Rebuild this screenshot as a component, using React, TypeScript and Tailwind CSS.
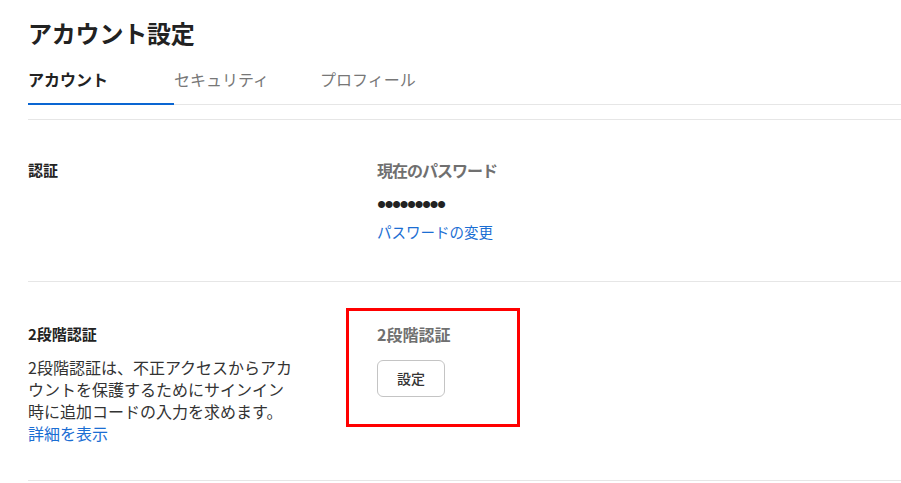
const FONT = "font-['Noto_Sans_CJK_JP','Noto_Sans',sans-serif]";

const TABS = ["アカウント", "セキュリティ", "プロフィール"];

export default function App() {
  return (
    <div className={`${FONT} bg-white min-h-[483px] pl-[28px] pt-[17px] text-[#222]`}>
      <h1 className="text-[24px] leading-[32px] font-bold tracking-[-0.2px]">アカウント設定</h1>

      {/* Tabs */}
      <div className="mt-[18px] flex border-b border-[#e6e6e6]">
        {TABS.map((tab, i) => (
          <div
            key={tab}
            className={
              i === 0
                ? "w-[146px] -mb-px border-b-2 border-[#0a66d2] pb-[11px] text-[16px] leading-[24px] font-bold text-[#222]"
                : "w-[146px] pb-[13px] text-[16px] leading-[24px] text-[#777]"
            }
          >
            {tab}
          </div>
        ))}
      </div>

      <div className="mt-[14px] border-t border-[#e6e6e6]" />

      {/* 認証 */}
      <div className="flex pt-[38px] pb-[38px] border-b border-[#e6e6e6]">
        <div className="w-[349px] text-[15px] leading-[24px] font-bold">認証</div>
        <div className="flex flex-col">
          <div className="text-[16px] leading-[24px] font-bold text-[#707070] tracking-[-1px]">現在のパスワード</div>
          <div className="mt-[10px] font-['Liberation_Sans',sans-serif] text-[26px] leading-[24px] tracking-[-1.6px] text-[#222]">
            •••••••••
          </div>
          <a href="#" className="mt-[5px] text-[14.5px] leading-[22px] text-[#1b6ed3]">
            パスワードの変更
          </a>
        </div>
      </div>

      {/* 2段階認証 */}
      <div className="flex pt-10 pb-[36px] border-b border-[#e6e6e6]">
        <div className="w-[349px]">
          <div className="text-[15px] leading-[24px] font-bold">2段階認証</div>
          <p className="mt-[10px] w-[268px] text-[16px] leading-[22px] text-[#333]">
            2段階認証は、不正アクセスからアカウントを保護するためにサインイン時に追加コードの入力を求めます。
            <br />
            <a href="#" className="text-[#1b6ed3]">詳細を表示</a>
          </p>
        </div>
        <div className="relative flex flex-col items-start">
          <div className="text-[16px] leading-[24px] font-bold text-[#707070]">2段階認証</div>
          <button className="mt-[14px] h-[37px] w-[68px] rounded-[6px] border border-[#c4c4c4] bg-white text-[14px] font-medium text-[#333]">
            設定
          </button>
          <div className="pointer-events-none absolute left-[-31px] top-[-14px] h-[119px] w-[174px] border-[3px] border-[#ff0000]" />
        </div>
      </div>
    </div>
  );
}
